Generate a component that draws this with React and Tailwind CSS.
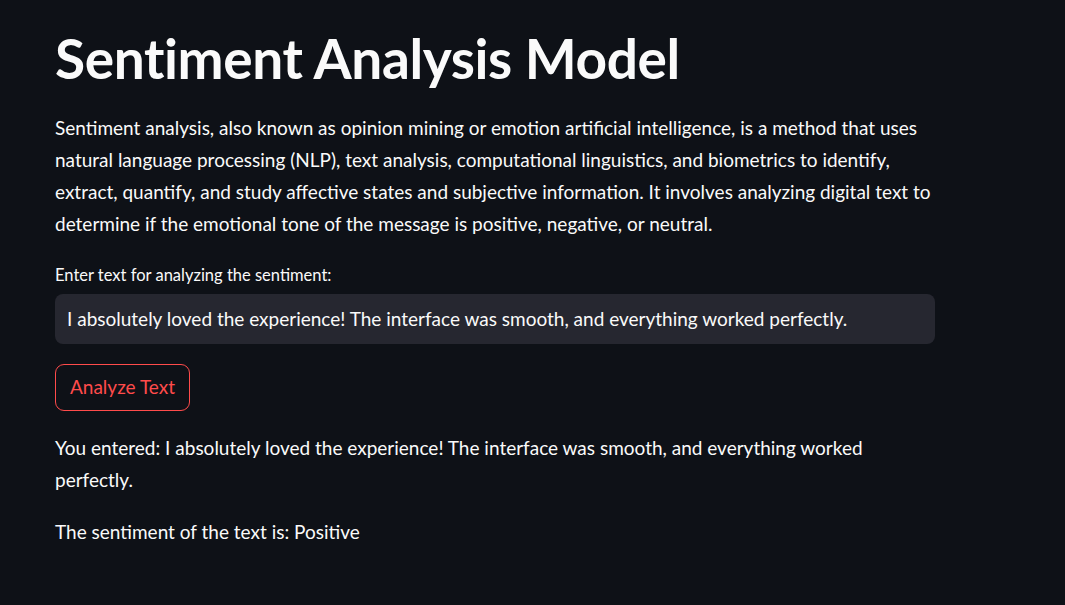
export default function App() {
  return (
    <div
      className="min-h-screen w-full bg-[#0e1117] text-[#fafafa]"
      style={{ fontFamily: '"Lato", "Liberation Sans", sans-serif' }}
    >
      <div className="w-[880px] ml-[55px] pt-[25px]">
        <h1 className="text-[55px] font-bold leading-[66px] tracking-[-0.4px]">
          Sentiment Analysis Model
        </h1>

        <p className="mt-[21px] text-[19px] leading-[32px]">
          Sentiment analysis, also known as opinion mining or emotion artificial intelligence, is a method that uses
          natural language processing (NLP), text analysis, computational linguistics, and biometrics to identify,
          extract, quantify, and study affective states and subjective information. It involves analyzing digital text to
          determine if the emotional tone of the message is positive, negative, or neutral.
        </p>

        <label className="mt-[24px] block text-[16.5px] leading-[22px]">
          Enter text for analyzing the sentiment:
        </label>

        <div className="mt-[8px] flex h-[50px] items-center rounded-lg bg-[#262730] px-3 text-[19px]">
          I absolutely loved the experience! The interface was smooth, and everything worked perfectly.
        </div>

        <button className="mt-[20px] h-[47px] rounded-[9px] border border-[#ff4b4b] px-[14px] text-[19px] text-[#ff4b4b]">
          Analyze Text
        </button>

        <p className="mt-[21px] text-[19px] leading-[32px]">
          You entered: I absolutely loved the experience! The interface was smooth, and everything worked
          <br />
          perfectly.
        </p>

        <p className="mt-[20px] text-[19px] leading-[32px]">The sentiment of the text is: Positive</p>
      </div>
    </div>
  );
}
